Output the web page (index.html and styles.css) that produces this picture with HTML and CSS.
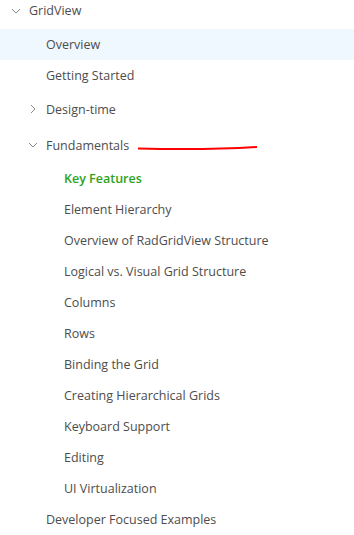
FILE: index.html
```html
<!DOCTYPE html>
<html lang="en">
<head>
    <meta charset="UTF-8">
    <meta name="viewport" content="width=device-width, initial-scale=1.0">
    <title>GridView</title>
    <link rel="stylesheet" href="styles.css">
</head>
<body>
    <div class="tree">
        <div class="row root">
            <svg class="chev" width="10" height="10" viewBox="0 0 10 10"><path d="M1 3 L5 7 L9 3" /></svg>
            <span>GridView</span>
        </div>
        <div class="row item active"><span>Overview</span></div>
        <div class="row item"><span>Getting Started</span></div>
        <div class="row folder">
            <svg class="chev" width="10" height="10" viewBox="0 0 10 10"><path d="M3 1 L7 5 L3 9" /></svg>
            <span>Design-time</span>
        </div>
        <div class="row folder">
            <svg class="chev" width="10" height="10" viewBox="0 0 10 10"><path d="M1 3 L5 7 L9 3" /></svg>
            <span>Fundamentals</span>
            <svg class="mark" width="122" height="6" viewBox="0 0 122 6"><path d="M1 3.5 C 40 4.5, 80 4.5, 120 2" /></svg>
        </div>
        <div class="row sub current"><span>Key Features</span></div>
        <div class="row sub"><span>Element Hierarchy</span></div>
        <div class="row sub"><span>Overview of RadGridView Structure</span></div>
        <div class="row sub"><span>Logical vs. Visual Grid Structure</span></div>
        <div class="row sub"><span>Columns</span></div>
        <div class="row sub"><span>Rows</span></div>
        <div class="row sub"><span>Binding the Grid</span></div>
        <div class="row sub"><span>Creating Hierarchical Grids</span></div>
        <div class="row sub"><span>Keyboard Support</span></div>
        <div class="row sub"><span>Editing</span></div>
        <div class="row sub"><span>UI Virtualization</span></div>
        <div class="row item"><span>Developer Focused Examples</span></div>
    </div>
</body>
</html>
```

FILE: styles.css
```css
body {
    margin: 0;
    background: #ffffff;
    font-family: "Open Sans", sans-serif;
    font-size: 12.5px;
    color: #4d4d4d;
}
.tree {
    display: flex;
    flex-direction: column;
}
.row {
    display: flex;
    align-items: center;
    height: 31px;
    white-space: nowrap;
}
.root {
    height: 21px;
    margin-bottom: 8px;
    padding-left: 11px;
}
.item {
    padding-left: 46px;
}
.active {
    background: #eff7ff;
}
.folder {
    height: 36px;
    padding-left: 28px;
}
.sub {
    padding-left: 64px;
}
.chev {
    fill: none;
    stroke: #8a8a8a;
    stroke-width: 1;
    margin-right: 8px;
}
.current {
    color: #2ea31a;
    font-weight: 600;
}
.mark {
    margin-left: 8px;
    margin-top: 6px;
    fill: none;
    stroke: #ff0000;
    stroke-width: 2;
}
```
